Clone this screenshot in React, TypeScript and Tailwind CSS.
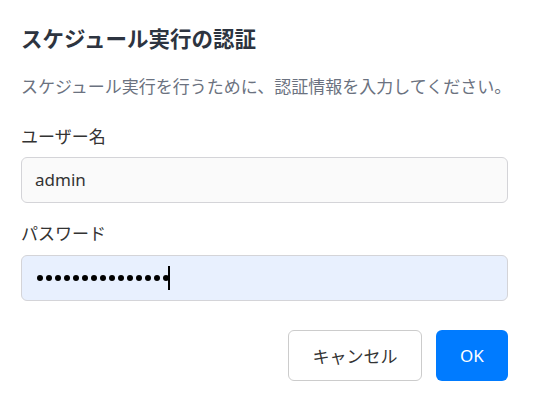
import React from "react";

export default function App() {
  const dots = Array.from({ length: 15 });
  return (
    <div
      className="w-[535px] h-[400px] bg-white pl-[21px] pr-[27px] pt-[22px]"
      style={{ fontFamily: '"Noto Sans CJK JP", "Noto Sans", sans-serif' }}
    >
      <h2 className="text-[21.5px] leading-[31px] font-bold text-[#2d3440]">
        スケジュール実行の認証
      </h2>
      <p className="mt-[20px] text-[17px] leading-[26px] text-[#6b7280] whitespace-nowrap">
        スケジュール実行を行うために、認証情報を入力してください。
      </p>
      <div className="mt-[25px] text-[17px] leading-[24px] text-[#333]">ユーザー名</div>
      <div
        className="mt-[9px] h-[46px] w-full rounded-[6px] border border-[#d4d4d8] bg-[#fafafa] flex items-center px-[13px] text-[17px] text-[#333]"
        style={{ fontFamily: '"Noto Sans", sans-serif' }}
      >
        admin
      </div>
      <div className="mt-[18px] text-[17px] leading-[24px] text-[#333]">パスワード</div>
      <div className="mt-[10px] h-[46px] w-full rounded-[6px] border border-[#d4d4d8] bg-[#e8f0fe] flex items-center px-[15px]">
        <div className="flex items-center gap-[3px]">
          {dots.map((_, i) => (
            <span key={i} className="block w-[6px] h-[6px] rounded-full bg-black" />
          ))}
        </div>
        <span className="block w-[2px] h-[24px] bg-black ml-[-1px]" />
      </div>
      <div className="mt-[29px] flex justify-end gap-[14px]">
        <button className="h-[51px] w-[134px] rounded-[6px] border border-[#cccccc] bg-white text-[17px] text-[#333]">
          キャンセル
        </button>
        <button
          className="h-[51px] w-[72px] rounded-[6px] bg-[#007bff] text-[17px] text-white"
          style={{ fontFamily: '"Noto Sans", sans-serif' }}
        >
          OK
        </button>
      </div>
    </div>
  );
}
